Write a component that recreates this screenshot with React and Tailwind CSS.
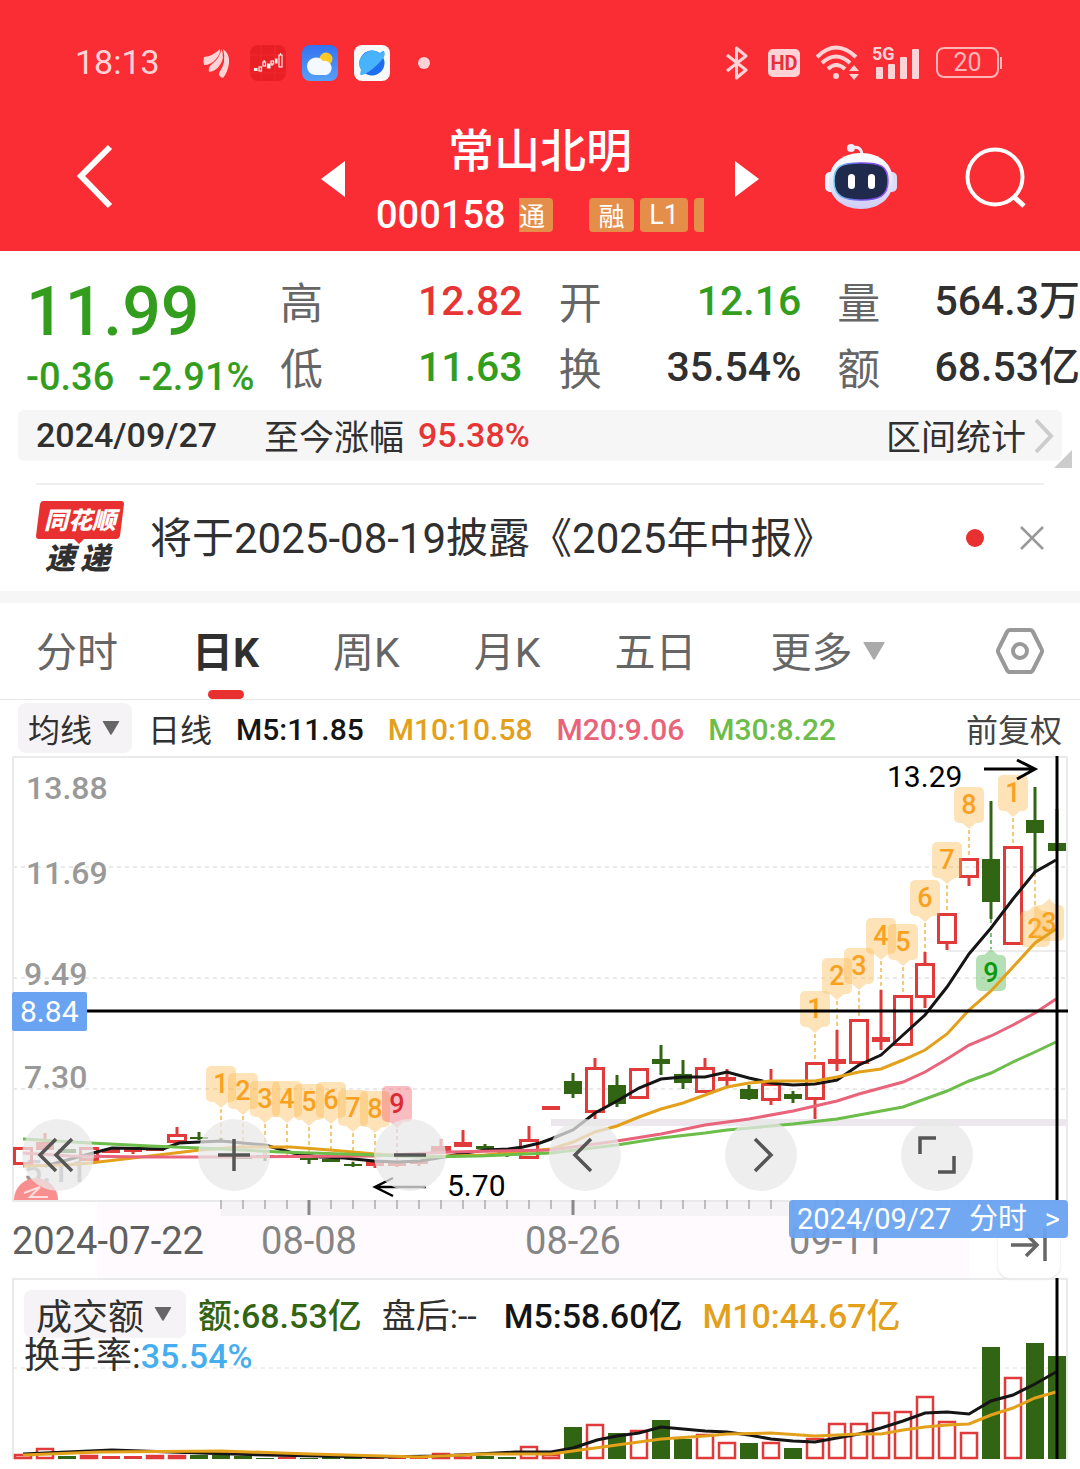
import React, { useState } from "react";

const NUM = "font-[Roboto,'Noto_Sans_CJK_SC',sans-serif]";
const HAN = "font-['Noto_Sans_CJK_SC',sans-serif]";

// one bar: [kind, open/close top, open/close bottom, high, low, volume top]
// kinds: r = hollow red, R = solid red, g = solid green
const BARS = [
    ["r", 1147, 1165, 1147, 1165, 1454],
    ["R", 1142, 1150, 1133, 1150, 1448],
    ["g", 1149, 1153, 1149, 1153, 1456],
    ["r", 1147, 1161, 1147, 1161, 1455],
    ["R", 1149, 1153, 1149, 1153, 1456],
    ["R", 1149, 1152, 1149, 1154, 1456],
    ["R", 1148, 1151, 1148, 1151, 1455],
    ["r", 1134, 1143, 1127, 1143, 1455],
    ["g", 1137, 1139, 1132, 1140, 1455],
    ["g", 1140, 1142, 1138, 1142, 1455],
    ["g", 1157, 1159, 1157, 1159, 1456],
    ["g", 1155, 1156, 1153, 1161, 1458],
    ["R", 1155, 1157, 1155, 1157, 1457],
    ["g", 1158, 1160, 1158, 1164, 1458],
    ["g", 1159, 1162, 1159, 1162, 1457],
    ["g", 1164, 1166, 1162, 1167, 1457],
    ["R", 1161, 1166, 1161, 1168, 1457],
    ["R", 1163, 1166, 1163, 1167, 1457],
    ["R", 1161, 1164, 1161, 1166, 1456],
    ["r", 1146, 1152, 1139, 1152, 1453],
    ["R", 1142, 1147, 1130, 1147, 1454],
    ["g", 1146, 1149, 1144, 1149, 1456],
    ["g", 1151, 1153, 1148, 1157, 1457],
    ["r", 1139, 1159, 1126, 1159, 1446],
    ["R", 1106, 1110, 1106, 1110, 1454],
    ["g", 1081, 1094, 1073, 1098, 1427],
    ["r", 1067, 1113, 1058, 1119, 1424],
    ["g", 1085, 1104, 1075, 1107, 1433],
    ["r", 1068, 1099, 1068, 1099, 1430],
    ["g", 1059, 1064, 1045, 1075, 1420],
    ["g", 1074, 1083, 1060, 1089, 1439],
    ["r", 1067, 1093, 1058, 1093, 1434],
    ["R", 1077, 1081, 1069, 1086, 1442],
    ["g", 1089, 1099, 1085, 1100, 1443],
    ["r", 1083, 1101, 1069, 1105, 1442],
    ["g", 1094, 1099, 1091, 1103, 1448],
    ["r", 1062, 1100, 1062, 1119, 1438],
    ["R", 1059, 1064, 1030, 1071, 1423],
    ["r", 1019, 1064, 1019, 1064, 1423],
    ["R", 1037, 1042, 990, 1050, 1412],
    ["r", 995, 1046, 995, 1046, 1411],
    ["r", 963, 998, 952, 1008, 1396],
    ["r", 913, 944, 913, 950, 1421],
    ["r", 858, 878, 858, 886, 1432],
    ["g", 859, 902, 801, 919, 1347],
    ["r", 846, 945, 846, 945, 1377],
    ["g", 820, 833, 787, 873, 1343],
    ["g", 843, 851, 809, 851, 1356],
];

const LINES = [
    ["#151515", "45,1166 67,1160 93,1153 112,1148 163,1149 179,1143 221,1141 265,1145 293,1153 320,1157 344,1158 374,1161 397,1162 420,1161 444,1157 465,1153 486,1150 508,1149 523,1147 540,1143 551,1139 573,1130 595,1113 617,1101 639,1088 661,1079 683,1077 705,1077 727,1072 749,1078 771,1083 793,1085 815,1084 837,1080 859,1065 881,1055 903,1035 925,1015 947,987 969,954 991,928 1013,899 1035,872 1056,860"],
    ["#e3a01b", "23,1166 67,1165 90,1163 150,1156 200,1150 240,1147 290,1147 330,1150 375,1154 420,1157 450,1156 485,1155 520,1152 551,1149 573,1142 595,1132 617,1126 639,1117 661,1109 683,1103 705,1095 727,1087 749,1083 771,1081 815,1081 837,1077 859,1072 881,1069 903,1060 925,1050 947,1034 969,1010 991,991 1013,967 1035,943 1056,929"],
    ["#e9637a", "23,1153 70,1156 150,1157 230,1157 375,1156 410,1154 450,1152 551,1150 573,1147 617,1141 661,1134 705,1125 749,1119 793,1111 837,1101 859,1094 881,1088 903,1082 925,1072 947,1059 969,1045 991,1036 1013,1025 1035,1013 1056,999"],
    ["#6cbd49", "23,1139 90,1143 150,1146 200,1148 280,1152 375,1155 420,1157 480,1156 551,1153 617,1145 661,1138 705,1133 727,1130 771,1126 793,1124 837,1119 881,1111 903,1107 947,1091 969,1081 991,1073 1013,1062 1035,1052 1056,1042"],
];

const VOLUME_LINES = [
    ["#151515", "23,1454 67,1452 112,1450 200,1453 265,1455 375,1457 441,1456 515,1452 551,1452 573,1448 597,1440 617,1436 639,1433 661,1427 683,1429 705,1431 727,1432 749,1435 771,1439 793,1441 815,1442 837,1438 859,1434 881,1428 903,1421 925,1413 947,1412 969,1414 991,1401 1013,1395 1035,1384 1056,1372"],
    ["#e3a01b", "23,1455 100,1452 221,1451 310,1454 420,1457 485,1454 551,1454 573,1451 617,1445 661,1439 705,1436 727,1434 771,1433 815,1436 860,1434 881,1434 903,1430 925,1427 947,1425 969,1424 991,1415 1013,1408 1035,1398 1056,1392"],
];

// nine-turn signals: [bar index, label, top of the tag, end of the dashes, tone]
const SIGNALS = [
    [9, "1", 1066, 1138, "orange"],
    [10, "2", 1073, 1150, "orange"],
    [11, "3", 1081, 1155, "orange"],
    [12, "4", 1081, 1155, "orange"],
    [13, "5", 1084, 1158, "orange"],
    [14, "6", 1082, 1159, "orange"],
    [15, "7", 1090, 1162, "orange"],
    [16, "8", 1091, 1161, "orange"],
    [17, "9", 1086, 1163, "red"],
    [36, "1", 991, 1062, "orange"],
    [37, "2", 958, 1030, "orange"],
    [38, "3", 948, 1019, "orange"],
    [39, "4", 918, 990, "orange"],
    [40, "5", 924, 995, "orange"],
    [41, "6", 880, 952, "orange"],
    [42, "7", 842, 913, "orange"],
    [43, "8", 787, 858, "orange"],
    [45, "1", 775, 846, "orange"],
];

const SIGNALS_BELOW = [
    [44, "9", 955, 919, "green"],
    [46, "2", 911, 873, "orange"],
    [47, "3", 905, 899, "orange"],
];

const TONES = {
    orange: { fill: "#fdb849", text: "#f9a11f", line: "#f6c878" },
    red: { fill: "#f0555f", text: "#dc2a35", line: "#f3a3a8" },
    green: { fill: "#3fae3f", text: "#0a9a0a", line: "#7cc27c" },
};

const barX = (i) => 23 + i * 22;
const RED = "#e03a3a";
const GREEN = "#316413";

const Candle = ({ bar, x }) => {
    const [kind, top, bottom, high, low] = bar;
    const color = kind === "g" ? GREEN : RED;
    return (
        <g stroke={color} strokeWidth="3">
            {high < top && <line x1={x} x2={x} y1={high} y2={top} />}
            {low > bottom && <line x1={x} x2={x} y1={bottom} y2={low} />}
            {kind === "r" ? (
                <rect x={x - 8.5} y={top + 1.5} width="17" height={bottom - top - 3} fill="none" />
            ) : (
                <rect x={x - 9} y={top} width="18" height={bottom - top} fill={color} stroke="none" />
            )}
        </g>
    );
};

const Signal = ({ signal, below }) => {
    const [i, label, top, end, tone] = signal;
    // the last tag is kept inside the frame
    const x = Math.min(barX(i), 1049);
    const c = TONES[tone];
    const pointer = below
        ? `M${x - 7} ${top} L${x} ${top - 6} L${x + 7} ${top} Z`
        : `M${x - 7} ${top + 36} L${x} ${top + 42} L${x + 7} ${top + 36} Z`;
    return (
        <g>
            <line x1={x} x2={x} y1={below ? end : top + 43} y2={below ? top - 6 : end} stroke={c.line} strokeWidth="2" strokeDasharray="4 3" />
            <g fill={c.fill} opacity="0.38">
                <rect x={x - 15} y={top} width="30" height="36" rx="5" />
                <path d={pointer} />
            </g>
            <text x={x} y={top + 27} fill={c.text} textAnchor="middle" className="font-[Roboto,sans-serif] text-[27px] font-medium">{label}</text>
        </g>
    );
};

const Caret = ({ className }) => (
    <svg viewBox="0 0 22 18" className={className} fill="currentColor">
        <path d="M1 0H21Q22 0 21.500 1L12 17Q11 18.500 10 17L.5 1Q0 0 1 0Z" />
    </svg>
);

const StatusBar = () => (
    <div className="flex h-[125px] items-center justify-between pl-[75px] pr-[78px] text-[#ffd3d5]">
        <div className="flex items-center">
            <span className="w-[127px] font-[Roboto,sans-serif] text-[34px]">18:13</span>
            <svg viewBox="0 0 28 30" className="h-[30px] w-7" fill="currentColor">
                <path d="M2 9Q11 8 18 1Q19 5 14 11Q9 17 2 17Q1 13 2 9Z" />
                <path d="M19.500 1Q23 10 18 17Q14 23 7 24Q6 20 9 17Q18 10 19.500 1Z" />
                <path d="M21 1Q28 6 27 15Q26 24 21 30Q16 28 17 25Q25 14 21 1Z" />
            </svg>
            <svg viewBox="0 0 36 36" className="ml-5 size-9">
                <rect width="36" height="36" rx="8" fill="#e81f25" />
                <path d="M0 10H36M0 28H36M11 0V36M25 0V36" stroke="#ee2b30" />
                <g fill="none" stroke="#ffe9e9" strokeWidth="1.200">
                    <rect x="9" y="22" width="2.500" height="4" />
                    <rect x="13" y="17" width="2.500" height="4" />
                    <rect x="21" y="16" width="2.500" height="3" />
                    <rect x="29" y="10" width="3" height="12" />
                    <path d="M14.200 15V17M30.500 8V10M22 19V21" />
                    <path d="M4.500 23.500H7V25.500H4.500ZM17.500 19H20V23H17.500ZM25.500 14H27V18H25.500Z" fill="#fff" />
                </g>
            </svg>
            <svg viewBox="0 0 36 36" className="ml-4 size-9">
                <defs>
                    <linearGradient id="sky" x2="0" y2="1">
                        <stop stopColor="#3472f1" />
                        <stop offset="1" stopColor="#57a0fa" />
                    </linearGradient>
                </defs>
                <rect width="36" height="36" rx="8" fill="url(#sky)" />
                <circle cx="24" cy="14" r="6.500" fill="#fdc926" />
                <path d="M13 30A8.500 8.500 0 0 1 5 21A9 9 0 0 1 21 16A7 7 0 0 1 24 30Z" fill="#f4f8ff" />
            </svg>
            <svg viewBox="0 0 36 36" className="ml-4 size-9">
                <rect width="36" height="36" rx="8" fill="#f8f8f8" />
                <circle cx="18" cy="18" r="12.500" fill="#1f6cf0" />
                <path d="M30 6Q33 11 24 19Q15 28 8 30Q5 31 7 25Q2 17 9 10Q17 2 26 8Q29 5 30 6Z" fill="#48b3fa" />
            </svg>
            <span className="ml-7 size-3 rounded-full bg-[#ffd3d5]" />
        </div>
        <div className="flex items-center">
            <svg viewBox="0 0 22 34" className="h-[34px] w-[22px]" fill="none" stroke="currentColor" strokeWidth="3">
                <path d="M1 9L20 24L10.500 32V2L20 10L1 25" strokeLinejoin="round" />
            </svg>
            <span className="ml-5 flex h-7 w-8 items-center justify-center rounded-[5px] bg-[#ffd3d5] font-[Roboto,sans-serif] text-[20px] font-bold text-[#e8303a]">HD</span>
            <svg viewBox="0 0 44 36" className="ml-4 h-9 w-11" fill="none" stroke="currentColor" strokeWidth="4">
                <path d="M1 12Q20 -7 40 12M6 18Q20 5 34 18M12 24Q20 16 29 24" />
                <circle cx="20" cy="31" r="3" fill="currentColor" stroke="none" />
                <path d="M33 26L38 20L43 26ZM33 29L38 35L43 29Z" fill="currentColor" stroke="none" />
            </svg>
            <div className="relative ml-3 h-[34px] w-12">
                <svg viewBox="0 0 48 34" className="size-full" fill="currentColor">
                    <rect x="4" y="21" width="7" height="12" rx="1" />
                    <rect x="16" y="18" width="7" height="15" rx="1" />
                    <rect x="28" y="11" width="7" height="22" rx="1" />
                    <rect x="40" y="3" width="7" height="30" rx="1" />
                </svg>
                <span className="absolute left-0 top-0 font-[Roboto,sans-serif] text-[18px] font-bold leading-4">5G</span>
            </div>
            <span className="ml-4 flex h-[31px] w-[63px] items-center justify-center rounded-lg border-2 border-[#ffb5b8] font-[Roboto,sans-serif] text-[25px] text-[#ffb5b8]">20</span>
            <span className="ml-px h-3 w-0.5 bg-[#ffb5b8]" />
        </div>
    </div>
);

const Robot = () => (
    <svg viewBox="0 0 72 68" className="h-[68px] w-[72px]">
        <defs>
            <linearGradient id="shell" x2="0" y2="1">
                <stop stopColor="#ffffff" />
                <stop offset="1" stopColor="#cfcdf6" />
            </linearGradient>
            <linearGradient id="rim">
                <stop stopColor="#6fd0f2" />
                <stop offset="0.5" stopColor="#6a4be6" />
                <stop offset="1" stopColor="#9a55f5" />
            </linearGradient>
        </defs>
        <path d="M26 5Q37 2 37 13" fill="none" stroke="#f1ecfb" strokeWidth="3" />
        <circle cx="26" cy="5" r="4" fill="#f1ecfb" />
        <rect x="0" y="29" width="12" height="20" rx="5" fill="#f3f2ff" />
        <rect x="60" y="29" width="12" height="20" rx="5" fill="#dcdaf9" />
        <path d="M36 10C56 10 68 22 68 38C68 55 54 66 36 66C18 66 4 55 4 38C4 22 16 10 36 10Z" fill="url(#shell)" />
        <path d="M36 20C56 20 63 23 63 38C63 53 54 57 36 57C18 57 9 53 9 38C9 23 16 20 36 20Z" fill="#1f2a4d" stroke="url(#rim)" strokeWidth="1.500" />
        <rect x="23" y="31" width="7" height="15" rx="3.500" fill="#fff" />
        <rect x="43" y="31" width="7" height="15" rx="3.500" fill="#fff" />
    </svg>
);

const Header = () => (
    <div className="grid h-[126px] grid-cols-[1fr_24px_390px_24px_1fr] items-start text-white">
        <div className="pl-[76px] pt-[19px]">
            <button aria-label="返回" className="block">
                <svg viewBox="0 0 37 66" className="h-[66px] w-[37px]" fill="none" stroke="currentColor" strokeWidth="6">
                    <path d="M34 3L5 32L34 62" />
                </svg>
            </button>
        </div>
        <button aria-label="上一只" className="pt-9">
            <svg viewBox="0 0 24 36" className="h-9 w-6" fill="currentColor"><path d="M24 0V36L0 18Z" /></svg>
        </button>
        <div className="flex flex-col items-center">
            <h1 className={`${HAN} text-[46px] font-medium leading-[44px]`}>常山北明</h1>
            <div className="mt-5 flex h-[52px] items-center">
                <span className={`${NUM} w-[143px] text-[38px] font-medium`}>000158</span>
                <span className={`${HAN} flex h-[34px] w-[34px] items-center rounded-r bg-[#e58e4a] text-[26px] leading-8`}>通</span>
                <span className={`${HAN} ml-9 flex h-[34px] w-[45px] items-center justify-center rounded bg-[#e58e4a] text-[26px] leading-8`}>融</span>
                <span className="ml-1.5 flex h-[34px] w-12 items-center justify-center rounded bg-[#e58e4a] font-[Roboto,sans-serif] text-[27px]">L1</span>
                <span className="ml-1.5 h-[34px] w-2.5 rounded-l bg-[#e58e4a]" />
            </div>
        </div>
        <button aria-label="下一只" className="pt-9">
            <svg viewBox="0 0 24 36" className="h-9 w-6" fill="currentColor"><path d="M0 0V36L24 18Z" /></svg>
        </button>
        <div className="flex items-center justify-between pl-[66px] pr-[53px] pt-[18px]">
            <button aria-label="智能助手"><Robot /></button>
            <button aria-label="搜索">
                <svg viewBox="0 0 62 62" className="size-[62px]" fill="none" stroke="currentColor" strokeWidth="4">
                    <circle cx="30" cy="31" r="27.500" />
                    <path d="M48 50L59 60" strokeWidth="5" />
                </svg>
            </button>
        </div>
    </div>
);

const QUOTES = [
    ["高", "12.82", "text-[#e73434]"],
    ["开", "12.16", "text-[#339d1e]"],
    ["量", "564.3万", "text-[#303030]"],
    ["低", "11.63", "text-[#339d1e]"],
    ["换", "35.54%", "text-[#303030]"],
    ["额", "68.53亿", "text-[#303030]"],
];

const Quote = () => (
    <div className="flex pt-4">
        <div className={`${NUM} w-[280px] pl-[26px] font-medium text-[#339d1e]`}>
            <div className="pb-1.5 pt-2 text-[68px] leading-[74px]">11.99</div>
            <div className="flex gap-6 text-[38px] leading-[44px]">
                <span>-0.36</span>
                <span>-2.91%</span>
            </div>
        </div>
        <dl className="grid flex-1 grid-cols-3 gap-x-9">
            {QUOTES.map(([label, value, color]) => (
                <div key={label} className="flex h-[66px] items-center justify-between">
                    <dt className={`${HAN} text-[43px] leading-[60px] text-[#666]`}>{label}</dt>
                    <dd className={`${NUM} pt-1 text-[41px] font-medium ${color}`}>{value}</dd>
                </div>
            ))}
        </dl>
    </div>
);

const RangeBar = () => (
    <div className="relative mx-[18px] mt-[11px] flex h-[51px] items-center rounded-md bg-[#f6f6f6] pl-[18px] pr-2 text-[#303030]">
        <span className={`${NUM} w-[228px] text-[34px] font-medium`}>2024/09/27</span>
        <span className={`${HAN} mr-3.5 text-[35px]`}>至今涨幅</span>
        <span className={`${NUM} text-[34px] font-medium text-[#e73434]`}>95.38%</span>
        <button className="ml-auto flex items-center gap-2">
            <span className={`${HAN} text-[35px]`}>区间统计</span>
            <svg viewBox="0 0 20 36" className="h-9 w-5" fill="none" stroke="#ccc" strokeWidth="4"><path d="M2 2L17 18L2 34" /></svg>
        </button>
        <svg viewBox="0 0 18 18" className="absolute -bottom-[7px] -right-2.5 size-[18px]" fill="#ccc"><path d="M18 0V18H0Z" /></svg>
    </div>
);

const Notice = () => (
    <div className="mx-9 mt-[22px] flex h-[108px] items-center border-t-2 border-[#eee] text-[#303030]">
        <svg viewBox="0 0 88 74" className="h-[74px] w-[88px] overflow-visible">
            <path d="M7 0H85Q88 0 88 3L84 35Q83 38 80 38H48L43 43L38 38H3Q0 38 0 35L4 3Q5 0 7 0Z" fill="#e93030" />
            <text x="8" y="28" fill="#fff" className="font-['Noto_Sans_CJK_SC',sans-serif] text-[24px] font-black italic">同花顺</text>
            <text x="9" y="68" fill="#303030" className="font-['Noto_Sans_CJK_SC',sans-serif] text-[30px] font-black italic">速</text>
            <text x="44" y="68" fill="#303030" className="font-['Noto_Sans_CJK_SC',sans-serif] text-[30px] font-black italic">递</text>
        </svg>
        <a href="#report" className={`${NUM} ml-[26px] whitespace-nowrap text-[42px]`}>将于2025-08-19披露《2025年中报》</a>
        <span className="ml-auto size-[18px] rounded-full bg-[#e93030]" />
        <button aria-label="关闭" className="ml-9">
            <svg viewBox="0 0 24 24" className="size-6" fill="none" stroke="#999" strokeWidth="2.500"><path d="M1 1L23 23M23 1L1 23" /></svg>
        </button>
    </div>
);

const Tabs = () => {
    const [tab, setTab] = useState("日K");
    return (
        <nav className={`${NUM} flex h-[97px] items-center gap-[74px] border-b border-[#e6e6e6] px-9 text-[41px] text-[#666]`}>
            {["分时", "日K", "周K", "月K", "五日"].map((name) => (
                <button
                    key={name}
                    onClick={() => setTab(name)}
                    className={`relative h-full whitespace-nowrap pt-1.5 ${tab === name ? "font-bold text-[#303030]" : ""}`}
                >
                    {name}
                    {tab === name && <span className="absolute bottom-0 left-1/2 h-[9px] w-9 -translate-x-1/2 rounded-full bg-[#e93030]" />}
                </button>
            ))}
            <label className="flex items-center gap-2.5">
                <select aria-label="更多周期" className="appearance-none pt-1.5">
                    <option>更多</option>
                </select>
                <Caret className="h-[18px] w-[22px] text-[#aaa]" />
            </label>
            <button aria-label="设置" className="ml-auto">
                <svg viewBox="0 0 48 46" className="h-[46px] w-12" fill="none" stroke="#999" strokeWidth="4" strokeLinejoin="round">
                    <path d="M14 2H34Q36 2 37 4L45 20Q47 23 45 26L37 42Q36 44 34 44H14Q12 44 11 42L3 26Q1 23 3 20L11 4Q12 2 14 2Z" />
                    <circle cx="24" cy="23" r="7" />
                </svg>
            </button>
        </nav>
    );
};

const MaRow = () => (
    <div className={`${HAN} flex h-14 items-center px-[18px] text-[32px] text-[#303030]`}>
        <label className="flex h-[50px] w-[114px] items-center justify-between rounded-lg bg-[#f6f3f7] pl-2.5 pr-3">
            <select aria-label="主图指标" className="appearance-none">
                <option>均线</option>
            </select>
            <Caret className="h-3.5 w-[18px] text-[#666]" />
        </label>
        <span className="ml-4 mr-6">日线</span>
        <div className="flex gap-6 pt-0.5 font-[Roboto,sans-serif] text-[30px] font-medium">
            <span className="text-[#151515]">M5:11.85</span>
            <span className="text-[#e3a01b]">M10:10.58</span>
            <span className="text-[#e9637a]">M20:9.06</span>
            <span className="text-[#6cbd49]">M30:8.22</span>
        </div>
        <button className="ml-auto text-[#444]">前复权</button>
    </div>
);

const AXIS_LABELS = [
    ["13.88", 26, 799],
    ["11.69", 26, 884],
    ["9.49", 24, 985],
    ["7.30", 24, 1088],
    ["5.11", 24, 1182],
];

const NAV = [
    ["最早", "M34 20L18 36L34 52M50 20L34 36L50 52"],
    ["放大", "M36 20V52M20 36H52"],
    ["缩小", "M20 36H52"],
    ["左移", "M42 20L26 36L42 52"],
    ["右移", "M30 20L46 36L30 52"],
    ["全屏", "M19 35V19H35M53 37V53H37"],
];

const PriceChart = () => (
    <div className="relative">
        <svg viewBox="0 756 1080 444" className="block w-full overflow-visible">
            <path d="M13 1200V757H1067V1200" fill="none" stroke="#eaeaea" strokeWidth="2" />
            <path d="M13 867H1067M13 978H1067M13 1089H1067" stroke="#e9e9e9" strokeWidth="2" strokeDasharray="4 4" />
            <path d="M947 951H1067" stroke="#ececec" strokeWidth="2" />
            <rect x="551" y="1119" width="516" height="7" fill="#ece7ec" />
            {AXIS_LABELS.map(([label, x, y]) => (
                <text key={label} x={x} y={y} fill="#999" className={`${NUM} text-[32px] font-medium`}>{label}</text>
            ))}
            <path d="M14 1200A22 22 0 0 1 58 1200Z" fill="#f98e8e" />
            <path d="M24 1193L40 1187L30 1197H48" fill="none" stroke="#fff" strokeWidth="2" opacity="0.7" />
            {BARS.map((bar, i) => <Candle key={i} bar={bar} x={barX(i)} />)}
            {SIGNALS.map((s) => <Signal key={s[0]} signal={s} />)}
            {SIGNALS_BELOW.map((s) => <Signal key={s[0]} signal={s} below />)}
            {LINES.map(([color, points]) => (
                <polyline key={color} points={points} fill="none" stroke={color} strokeWidth="3" />
            ))}
            <g fill="none" stroke="#000" strokeWidth="3">
                <path d="M984 769H1034M1017 760L1035 769L1017 779" />
                <path d="M426 1187H376M393 1178L375 1187L393 1196" strokeWidth="2.500" />
                <path d="M87 1011H1068M1057 756V1200" />
            </g>
            <g className="font-[Roboto,sans-serif] text-[30px]">
                <text x="887" y="787">13.29</text>
                <text x="447" y="1196">5.70</text>
                <rect x="12" y="992" width="75" height="39" rx="2" fill="#6aa3f2" />
                <text x="20" y="1022" fill="#fff">8.84</text>
            </g>
        </svg>
        <div className="absolute inset-x-0 bottom-[9px] flex justify-between pl-[22px] pr-[107px]">
            {NAV.map(([name, d]) => (
                <button key={name} aria-label={name} className="size-[72px] rounded-full bg-[#e8e8e8]/75">
                    <svg viewBox="0 0 72 72" className="size-full" fill="none" stroke="#555" strokeWidth="3.500"><path d={d} /></svg>
                </button>
            ))}
        </div>
    </div>
);

const DateAxis = () => (
    <div className="relative">
        <svg viewBox="0 1200 1080 78" className="block w-full">
            <rect x="97" y="1200" width="873" height="78" fill="#fefafe" />
            <rect x="12" y="1198" width="1056" height="4" fill="#e9e9e9" />
            <rect x="221" y="1202" width="846" height="14" fill="#f6f3f6" />
            {BARS.slice(9, 45).map((_, k) => {
                const major = [4, 16, 28].includes(k);
                return <line key={k} x1={barX(k + 9)} x2={barX(k + 9)} y1="1200" y2={major ? 1215 : 1209} stroke="#888" strokeWidth={major ? 3 : 1} />;
            })}
            <g className={`${NUM} text-[38px]`} fill="#858585">
                <text x="12" y="1254" fill="#606060">2024-07-22</text>
                <text x="309" y="1254" textAnchor="middle">08-08</text>
                <text x="573" y="1254" textAnchor="middle">08-26</text>
                <text x="837" y="1254" textAnchor="middle">09-11</text>
            </g>
        </svg>
        <button aria-label="最新" className="absolute right-5 top-4 h-[62px] w-[62px] rounded-xl bg-white shadow">
            <svg viewBox="0 0 62 62" className="size-full" fill="none" stroke="#666" strokeWidth="3.500"><path d="M13 29H39M28 18L39 29L28 40M47 12V45" /></svg>
        </button>
        <a href="#minute" className={`${NUM} absolute right-3 top-0 flex h-[38px] w-[279px] items-center justify-between rounded-sm bg-[#6aa3f0]/95 px-2 pt-0.5 text-[29px] text-white`}>
            <span>2024/09/27</span>
            <span>分时</span>
            <span>&gt;</span>
        </a>
    </div>
);

const VolumeChart = () => (
    <div className="relative">
        <svg viewBox="0 1278 1080 191" className="block w-full">
            <path d="M13 1459V1279H1067V1459" fill="none" stroke="#eaeaea" strokeWidth="2" />
            <path d="M13 1368H1067" stroke="#ddd" strokeDasharray="4 4" />
            {BARS.map(([kind, , , , , top], i) => {
                const height = 1459 - top;
                return kind === "g" || height < 4 ? (
                    <rect key={i} x={barX(i) - 9} y={top} width="18" height={height} fill={kind === "g" ? GREEN : RED} />
                ) : (
                    <rect key={i} x={barX(i) - 8} y={top + 1} width="16" height={height - 2} fill="none" stroke={RED} strokeWidth="2.500" />
                );
            })}
            {VOLUME_LINES.map(([color, points]) => (
                <polyline key={color} points={points} fill="none" stroke={color} strokeWidth="3" />
            ))}
            <path d="M1057 1278V1459" stroke="#000" strokeWidth="3" />
        </svg>
        <div className={`${NUM} absolute left-6 top-3 whitespace-nowrap text-[34px] font-medium text-[#303030]`}>
            <div className="flex h-12 items-center">
                <label className={`${HAN} mr-3 flex h-12 w-[162px] items-center justify-between rounded-lg bg-[#f6f3f7] pl-3 pr-3.5 text-[36px] font-normal`}>
                    <select aria-label="副图指标" className="appearance-none">
                        <option>成交额</option>
                    </select>
                    <Caret className="h-3.5 w-[18px] text-[#666]" />
                </label>
                <div className="flex pt-1">
                    <span className="text-[#316413]">额:68.53亿</span>
                    <span className="ml-5 w-[122px] font-normal">盘后:--</span>
                    <span className="text-[#151515]">M5:58.60亿</span>
                    <span className="ml-5 text-[#e3a01b]">M10:44.67亿</span>
                </div>
            </div>
            <div className="leading-9"><span className="text-[36px] font-normal">换手率:</span><span className="text-[#46aeee]">35.54%</span></div>
        </div>
    </div>
);

const App = () => (
    <div className="min-h-screen bg-white">
        <header className="bg-[#f92d33]">
            <StatusBar />
            <Header />
        </header>
        <Quote />
        <RangeBar />
        <Notice />
        <div className="h-3 bg-[#f6f6f6]" />
        <Tabs />
        <MaRow />
        <PriceChart />
        <DateAxis />
        <VolumeChart />
    </div>
);

export default App;
